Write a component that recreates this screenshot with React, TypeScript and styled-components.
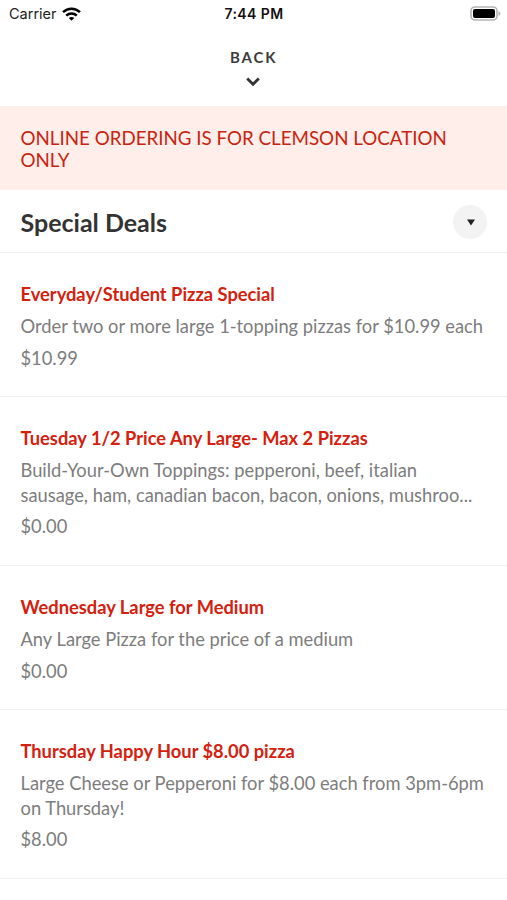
import React from 'react';
import styled, { createGlobalStyle } from 'styled-components';

const Global = createGlobalStyle`
  * { box-sizing: border-box; }
  body { margin: 0; background: #fff; font-family: Lato, sans-serif; overflow: hidden; }
  h1, h2, p { margin: 0; }
`;
const Page = styled.main`
  width: 507px; height: 900px; background: #fff; overflow: hidden;
`;
const StatusBar = styled.div`
  height: 28px; display: grid; grid-template-columns: 1fr auto 1fr; align-items: center;
  padding: 0 6px 0 9px; font: 400 14.5px/28px Inter, sans-serif; color: #222;
`;
const Carrier = styled.div`display: flex; align-items: center; gap: 5px;`;
const Clock = styled.div`font-weight: 600; font-size: 14px; letter-spacing: 0.4px; color: #111; margin-left: -2px;`;
const Battery = styled.svg`justify-self: end; margin-top: -2px;`;
const Back = styled.button`
  display: flex; flex-direction: column; align-items: center; width: 100%; height: 79px;
  padding: 19px 1px 0 0; border: 0; border-bottom: 1px solid #f5f0f0; background: #fff;
  font: 700 15px/20px Lato, sans-serif; color: #3c3c3c;
`;
const BackLabel = styled.span`letter-spacing: 1.9px; padding-left: 1.5px;`;
const Chevron = styled.svg`margin-top: 10px;`;
const Notice = styled.p`
  height: 83px; padding: 20px 20.5px 0; background: #ffeeea; color: #c9240f;
  font-size: 18.75px; line-height: 22px;
`;
const Section = styled.header`
  height: 63px; padding: 0 20px 0 20.5px; display: flex; align-items: center; justify-content: space-between;
  border-bottom: 1px solid #f0f0f0;
`;
const Title = styled.h1`
  padding-top: 2px; font-size: 25px; line-height: 30px; font-weight: 700; color: #333;
`;
const Toggle = styled.button`
  width: 34px; height: 34px; border: 0; border-radius: 50%; background: #f3f3f3; padding: 1px 0 0 1px;
  margin-top: 1px; display: grid; place-items: center;
`;
const Deal = styled.article<{ $tall?: boolean }>`
  height: ${p => (p.$tall ? 169 : 144)}px; padding: 29px 20.5px 0; border-bottom: 1px solid #f0f0f0;
`;
const DealName = styled.h2`font-size: 18.3px; line-height: 24px; font-weight: 700; color: #d5200d;`;
const Description = styled.p`
  margin-top: 8px; font-size: 18.32px; line-height: 24.5px; color: #7d7d7d; white-space: nowrap;
`;
const Price = styled(Description)`margin-top: 7px;`;

const deals = [
  { name: 'Everyday/Student Pizza Special', lines: ['Order two or more large 1-topping pizzas for $10.99 each'], price: '$10.99' },
  { name: 'Tuesday 1/2 Price Any Large- Max 2 Pizzas', lines: ['Build-Your-Own Toppings: pepperoni, beef, italian', 'sausage, ham, canadian bacon, bacon, onions, mushroo...'], price: '$0.00' },
  { name: 'Wednesday Large for Medium', lines: ['Any Large Pizza for the price of a medium'], price: '$0.00' },
  { name: 'Thursday Happy Hour $8.00 pizza', lines: ['Large Cheese or Pepperoni for $8.00 each from 3pm-6pm', 'on Thursday!'], price: '$8.00' },
];

export default function App() {
  return (
    <Page>
      <Global />
      <StatusBar>
        <Carrier>
          Carrier
          <svg width="19" height="15" viewBox="0 0 18 14" fill="none" stroke="#000" strokeWidth="2.4">
            <path d="M1 4.8C5.5.4 12.5.4 17 4.8" />
            <path d="M4 8C6.8 5.3 11.2 5.3 14 8" />
            <path d="M6.4 10.3C7.9 8.9 10.1 8.9 11.6 10.3L9 13Z" fill="#000" stroke="none" />
          </svg>
        </Carrier>
        <Clock>7:44 PM</Clock>
        <Battery width="31" height="15" viewBox="0 0 31 15">
          <rect x="1" y="1" width="26" height="13" rx="4" fill="none" stroke="#b5b5b5" strokeWidth="1.6" />
          <rect x="3" y="3" width="22" height="9" rx="2" />
          <path d="M28.5 5Q30.5 6 30.5 7.5T28.5 10Z" fill="#b5b5b5" />
        </Battery>
      </StatusBar>
      <Back>
        <BackLabel>BACK</BackLabel>
        <Chevron width="14" height="10" viewBox="0 0 14 10" fill="none" stroke="#333" strokeWidth="2.8">
          <path d="M1.2 1.5L7 7.2L12.8 1.5" />
        </Chevron>
      </Back>
      <Notice>ONLINE ORDERING IS FOR CLEMSON LOCATION ONLY</Notice>
      <Section>
        <Title>Special Deals</Title>
        <Toggle aria-label="Collapse section">
          <svg width="10" height="7" viewBox="0 0 10 7"><path d="M1 .5H9L5 6.5Z" fill="#222" /></svg>
        </Toggle>
      </Section>
      {deals.map(d => (
        <Deal key={d.name} $tall={d.lines.length > 1}>
          <DealName>{d.name}</DealName>
          <Description>{d.lines.map(l => <React.Fragment key={l}>{l}<br /></React.Fragment>)}</Description>
          <Price>{d.price}</Price>
        </Deal>
      ))}
    </Page>
  );
}
